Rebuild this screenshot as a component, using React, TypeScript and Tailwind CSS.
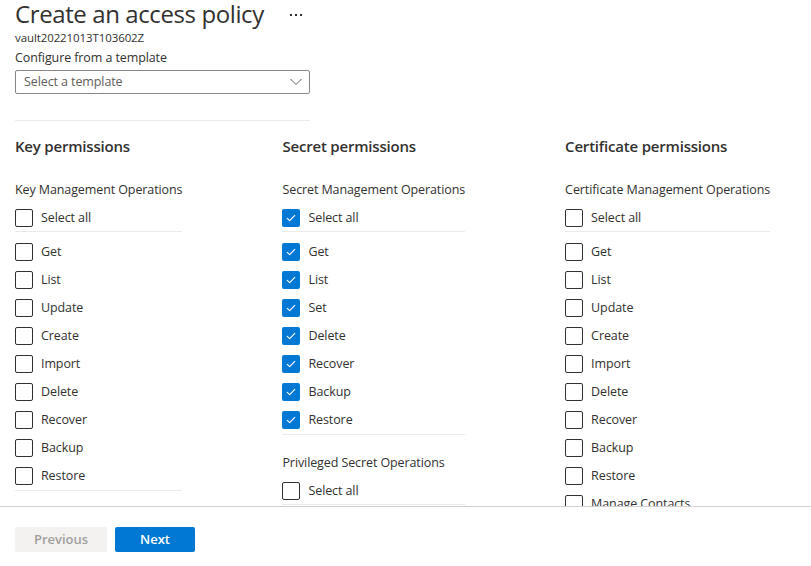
type Section = {
  title: string;
  items: string[];
  checked?: boolean;
};

type Column = {
  heading: string;
  sections: Section[];
};

const columns: Column[] = [
  {
    heading: "Key permissions",
    sections: [
      {
        title: "Key Management Operations",
        items: ["Get", "List", "Update", "Create", "Import", "Delete", "Recover", "Backup", "Restore"]
      }
    ]
  },
  {
    heading: "Secret permissions",
    sections: [
      {
        title: "Secret Management Operations",
        items: ["Get", "List", "Set", "Delete", "Recover", "Backup", "Restore"],
        checked: true
      },
      {
        title: "Privileged Secret Operations",
        items: ["Purge"]
      }
    ]
  },
  {
    heading: "Certificate permissions",
    sections: [
      {
        title: "Certificate Management Operations",
        items: [
          "Get",
          "List",
          "Update",
          "Create",
          "Import",
          "Delete",
          "Recover",
          "Backup",
          "Restore",
          "Manage Contacts",
          "Manage Certificate Authorities"
        ]
      }
    ]
  }
];

function Checkbox({ checked }: { checked?: boolean }) {
  if (checked) {
    return (
      <span className="flex h-[18px] w-[18px] shrink-0 items-center justify-center rounded-[2px] bg-[#0078d4]">
        <svg width="12" height="12" viewBox="0 0 12 12" fill="none">
          <path d="M2.2 6.3l2.5 2.4 5.1-5.3" stroke="white" strokeWidth="1.1" strokeLinecap="round" strokeLinejoin="round" />
        </svg>
      </span>
    );
  }
  return <span className="h-[18px] w-[18px] shrink-0 rounded-[2px] border border-[#323130] bg-white" />;
}

function Row({ label, checked }: { label: string; checked?: boolean }) {
  return (
    <div className="flex h-[28px] items-center gap-2">
      <Checkbox checked={checked} />
      <span className="whitespace-nowrap text-[12.5px] tracking-[-0.1px] text-[#323130]">{label}</span>
    </div>
  );
}

function PermissionSection({ section, first }: { section: Section; first: boolean }) {
  return (
    <div className={first ? "" : "mt-[19px]"}>
      <p className="mb-[5px] h-[18px] whitespace-nowrap text-[12.5px] leading-[18px] tracking-[-0.1px] text-[#323130]">
        {section.title}
      </p>
      <div className="h-[28px] border-b border-[#edebe9]">
        <Row label="Select all" checked={section.checked} />
      </div>
      {section.items.length > 1 ? (
        <div className="border-b border-[#edebe9] pt-[6px]">
          {section.items.map((item) => (
            <Row key={item} label={item} checked={section.checked} />
          ))}
        </div>
      ) : null}
    </div>
  );
}

export default function App() {
  return (
    <div className="flex h-[566px] w-[811px] flex-col overflow-hidden bg-white font-['Open_Sans',sans-serif] text-[#323130]">
      <header className="h-[52px] shrink-0 px-[15px]">
        <div className="-mt-[1px] flex h-[30px] items-center">
          <h1 className="text-[24px] leading-[30px] tracking-[-0.4px] text-[#323130]">Create an access policy</h1>
          <span className="ml-[26px] flex gap-[3px] pt-[2px]">
            <span className="h-[2px] w-[2px] bg-[#323130]" />
            <span className="h-[2px] w-[2px] bg-[#323130]" />
            <span className="h-[2px] w-[2px] bg-[#323130]" />
          </span>
        </div>
        <p className="mt-[1px] text-[11.5px] leading-[16px] tracking-[-0.1px] text-[#323130]">vault20221013T103602Z</p>
      </header>

      <main className="flex-1 overflow-hidden border-b border-[#d2d0ce]">
        <div className="-mt-[4px] px-[15px]">
          <div className="w-[295px]">
            <p className="h-[18px] text-[12.5px] leading-[20px] tracking-[-0.1px]">Configure from a template</p>
            <div className="mt-[4px] flex h-[24px] items-center justify-between rounded-[2px] border border-[#8a8886] pl-[8px] pr-[7px]">
              <span className="text-[12.5px] tracking-[-0.1px] text-[#605e5c]">Select a template</span>
              <svg width="12" height="8" viewBox="0 0 12 8" fill="none">
                <path d="M0.5 1l5.5 5.5L11.5 1" stroke="#605e5c" strokeWidth="1" />
              </svg>
            </div>
            <div className="mt-[26px] border-t border-[#edebe9]" />
          </div>

          <div className="mt-[15px] flex gap-[100px]">
            {columns.map((column) => (
              <div key={column.heading} className="w-max">
                <h2 className="h-[20px] text-[15px] font-semibold leading-[20px] tracking-[-0.2px] text-[#323130]">
                  {column.heading}
                </h2>
                <div className="mt-[25px]">
                  {column.sections.map((section, i) => (
                    <PermissionSection key={section.title} section={section} first={i === 0} />
                  ))}
                </div>
              </div>
            ))}
          </div>
        </div>
      </main>

      <footer className="flex h-[59px] shrink-0 items-start gap-2 px-[15px] pt-[20px]">
        <button className="h-[25px] w-[92px] rounded-[2px] bg-[#f3f2f1] text-[13px] font-semibold text-[#a19f9d]">
          Previous
        </button>
        <button className="h-[25px] w-[80px] rounded-[2px] bg-[#0078d4] text-[13px] font-semibold text-white">
          Next
        </button>
      </footer>
    </div>
  );
}
